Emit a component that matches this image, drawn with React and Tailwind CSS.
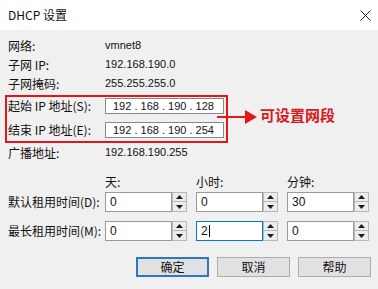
const cjk = "font-['Noto_Sans_CJK_SC',sans-serif]"
const num = "font-['Liberation_Sans',sans-serif]"

function InfoRow({ label, value }) {
  return (
    <div className="h-[19px] flex items-center">
      <span className={`w-[97px] text-[12px] leading-none ${cjk}`}>{label}</span>
      <span className={`text-[11px] leading-none ${num}`}>{value}</span>
    </div>
  )
}

function IpBox({ parts }) {
  return (
    <div className={`h-[16px] w-[119px] bg-white border border-[#828790] flex items-center pl-[7px] text-[11px] leading-none ${num}`}>
      {parts.join(' . ')}
    </div>
  )
}

function Spinner() {
  return (
    <div className="w-[15px] flex flex-col">
      <div className="h-[10px] bg-[#ececec] border border-[#b8b8b8] flex items-center justify-center">
        <svg width="7" height="4" viewBox="0 0 7 4"><polygon points="0,4 7,4 3.5,0" fill="#1a1a1a" /></svg>
      </div>
      <div className="h-[10px] bg-[#ececec] border border-[#b8b8b8] border-t-0 flex items-center justify-center">
        <svg width="7" height="4" viewBox="0 0 7 4"><polygon points="0,0 7,0 3.5,4" fill="#1a1a1a" /></svg>
      </div>
    </div>
  )
}

function SpinBox({ value, focused }) {
  return (
    <div className="w-[91px]">
      <div className="w-[82px] h-[20px] flex">
        <div className={`w-[67px] bg-white border flex items-center pl-[4px] text-[12px] leading-none ${num} ${focused ? 'border-[#0078d7]' : 'border-[#9a9a9a]'}`}>
          {value}
          {focused && <span className="w-px h-[12px] bg-black ml-px" />}
        </div>
        <Spinner />
      </div>
    </div>
  )
}

function Button({ children, primary }) {
  return (
    <div className={`w-[73px] h-[20px] bg-[#e1e1e1] flex items-center justify-center text-[12px] leading-none ${cjk} ${primary ? 'border-2 border-[#2b78c2]' : 'border border-[#adadad]'}`}>
      {children}
    </div>
  )
}

export default function App() {
  return (
    <div className="w-[378px] h-[289px] bg-[#f0f0f0] flex flex-col overflow-hidden text-[#111]">
      {/* Title bar */}
      <div className="h-[30px] bg-white flex items-center justify-between pl-2 pr-[7px]">
        <span className={`text-[12px] leading-none ${cjk}`}>DHCP 设置</span>
        <svg width="11" height="11" viewBox="0 0 11 11" stroke="#222" strokeWidth="1">
          <path d="M0.5 0.5L10.5 10.5M10.5 0.5L0.5 10.5" />
        </svg>
      </div>

      <div className="pl-2 pt-[6px] flex flex-col">
        <InfoRow label="网络:" value="vmnet8" />
        <InfoRow label="子网 IP:" value="192.168.190.0" />
        <InfoRow label="子网掩码:" value="255.255.255.0" />

        {/* Address range, marked in red */}
        <div className="flex items-start mt-[2px]">
          <div className="-ml-[3px] w-[223px] border-2 border-[#e8141b] pl-[1px] pr-[2px] pt-[1px] pb-[3px] flex flex-col gap-[8px]">
            <div className="flex items-center">
              <span className={`w-[97px] text-[12px] leading-none ${cjk}`}>起始 IP 地址(S):</span>
              <IpBox parts={['192', '168', '190', '128']} />
            </div>
            <div className="flex items-center">
              <span className={`w-[97px] text-[12px] leading-none ${cjk}`}>结束 IP 地址(E):</span>
              <IpBox parts={['192', '168', '190', '254']} />
            </div>
          </div>
          <svg className="-ml-[11px] mt-[15px]" width="40" height="14" viewBox="0 0 40 14">
            <line x1="0" y1="7" x2="29" y2="7" stroke="#e8141b" strokeWidth="2" />
            <polygon points="28,0 40,7 28,14" fill="#e8141b" />
          </svg>
          <span className={`ml-[3px] mt-[11px] text-[15px] leading-[18px] font-bold text-[#d41a22] ${cjk}`}>可设置网段</span>
        </div>

        <InfoRow label="广播地址:" value="192.168.190.255" />

        {/* Lease times */}
        <div className={`mt-[11px] h-[18px] flex items-center text-[12px] leading-none ${cjk}`}>
          <span className="w-[97px]" />
          <span className="w-[91px]">天:</span>
          <span className="w-[91px]">小时:</span>
          <span>分钟:</span>
        </div>
        <div className="mt-[1px] flex items-center">
          <span className={`w-[97px] text-[12px] leading-none ${cjk}`}>默认租用时间(D):</span>
          <SpinBox value="0" />
          <SpinBox value="0" />
          <SpinBox value="30" />
        </div>
        <div className="mt-[9px] flex items-center">
          <span className={`w-[97px] text-[12px] leading-none ${cjk}`}>最长租用时间(M):</span>
          <SpinBox value="0" />
          <SpinBox value="2" focused />
          <SpinBox value="0" />
        </div>

        {/* Buttons */}
        <div className="mt-[16px] flex justify-end gap-[8px] pr-[7px]">
          <Button primary>确定</Button>
          <Button>取消</Button>
          <Button>帮助</Button>
        </div>
      </div>
    </div>
  )
}
